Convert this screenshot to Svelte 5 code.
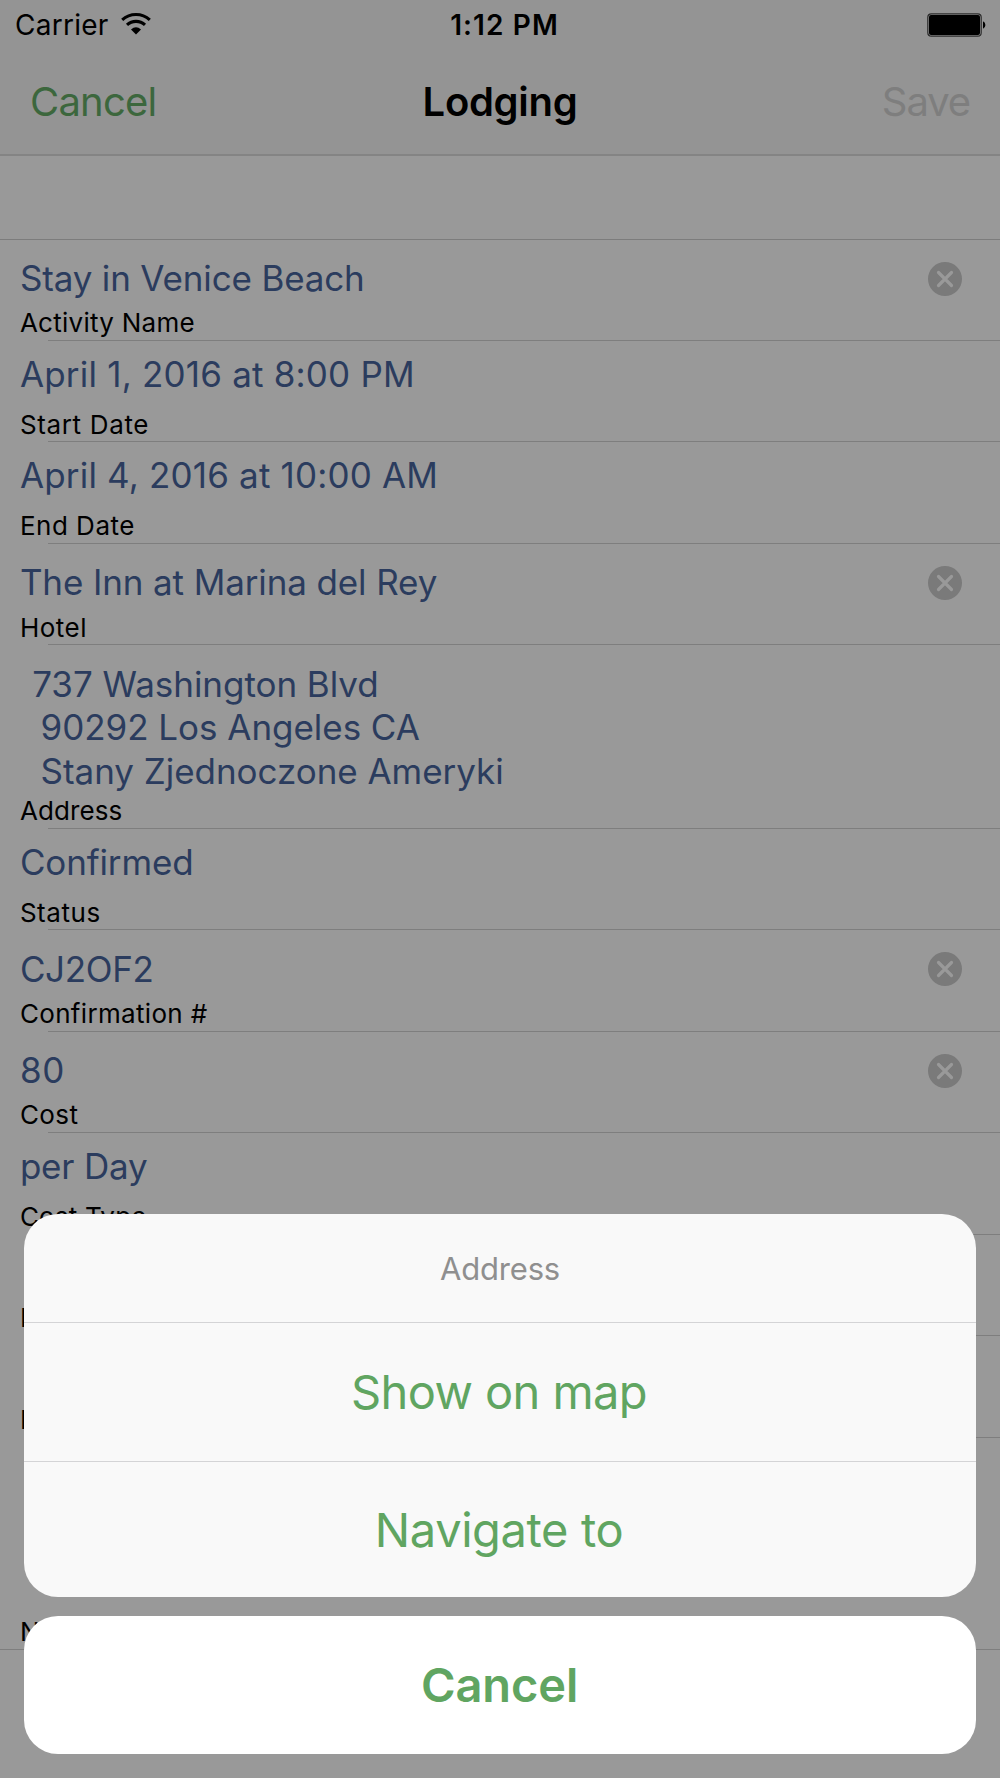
<script>
  const fields = [
    { label: 'Activity Name', lt: 0.27, lines: ['Stay in Venice Beach'], vt: -0.16, clear: true },
    { label: 'Start Date', lt: 0.65, lines: ['April 1, 2016 at 8:00 PM'], vt: 0.2 },
    { label: 'End Date', lt: 0.5, lines: ['April 4, 2016 at 10:00 AM'], vt: 0.18 },
    { label: 'Hotel', lt: 0.5, lines: ['The Inn at Marina del Rey'], vt: -0.12, clear: true },
    {
      label: 'Address', lt: 0.1, vt: -0.04, kind: 'address',
      lines: ['737 Washington Blvd', '90292 Los Angeles CA', 'Stany Zjednoczone Ameryki']
    },
    { label: 'Status', lt: 0.55, lines: ['Confirmed'], vt: -0.15 },
    { label: 'Confirmation #', lt: 0.33, lines: ['CJ2OF2'], vt: -0.35, clear: true },
    { label: 'Cost', lt: 0.4, lines: ['80'], vt: 0.6, clear: true },
    { label: 'Cost Type', lt: 0.2, lines: ['per Day'], vt: -0.2 },
    { label: 'Info', lt: 0.35, lines: [], vt: 0 },
    { label: 'Invoice', lt: 0.35, lines: [], vt: 0 },
    { label: 'Notes', lt: 0.35, lines: [], vt: 0, kind: 'notes' }
  ];
</script>

<div class="screen">
  <header>
    <div class="status">
      <div class="carrier">
        <span class="carrier-name">Carrier</span>
        <svg class="wifi" viewBox="0 0 30 22" width="30" height="22">
          <path d="M15 21.6 L10 16.4 Q15 12 20 16.4 Z" fill="#000" />
          <path d="M6 11.9 A13.2 13.2 0 0 1 24 11.9" fill="none" stroke="#000" stroke-width="3.1" />
          <path d="M1.2 6.9 A20.5 20.5 0 0 1 28.8 6.9" fill="none" stroke="#000" stroke-width="3.1" />
        </svg>
      </div>
      <span class="time">1:12 PM</span>
      <svg class="battery" viewBox="0 0 60 24" width="60" height="24">
        <rect x="0.8" y="0.8" width="53.4" height="22.4" rx="3.5" fill="none" stroke="#2c2c2c" stroke-width="1.2" />
        <rect x="2" y="2" width="51" height="20" rx="2" fill="#000" />
        <path d="M56 8.2 A4.2 4.2 0 0 1 56 15.8 Z" fill="#000" />
      </svg>
    </div>
    <nav>
      <span class="nav-cancel">Cancel</span>
      <h1>Lodging</h1>
      <span class="nav-save">Save</span>
    </nav>
  </header>

  <main>
    <div class="spacer"></div>
    {#each fields as f}
      <section class="row {f.kind ?? ''}" class:clearable={f.clear}>
        <div class="value" style:letter-spacing="{f.vt}px">
          {#each f.lines as line}<div class="line">{line}</div>{/each}
        </div>
        <div class="label" style:letter-spacing="{f.lt}px">{f.label}</div>
        {#if f.clear}
          <svg class="clear" viewBox="0 0 34 34" width="34" height="34">
            <circle cx="17" cy="17" r="17" fill="#7a7a7a" />
            <path d="M10.5 10.5 L23.5 23.5 M23.5 10.5 L10.5 23.5" stroke="#999" stroke-width="3.2" stroke-linecap="round" />
          </svg>
        {/if}
      </section>
    {/each}
  </main>

  <div class="sheet">
    <div class="group">
      <div class="title">Address</div>
      <div class="action show">Show on map</div>
      <div class="action navigate">Navigate to</div>
    </div>
    <div class="dismiss">Cancel</div>
  </div>
</div>

<style>
  :global(body) { margin: 0; background: #999; }
  .screen {
    position: relative;
    width: 1000px;
    height: 1778px;
    overflow: hidden;
    background: #999;
    color: #000;
    font-family: Inter, "Liberation Sans", sans-serif;
    white-space: nowrap;
  }
  header {
    box-sizing: border-box;
    height: 156px;
    background: #949494;
    border-bottom: 2px solid #848484;
  }
  .status, nav {
    display: grid;
    grid-template-columns: 1fr auto 1fr;
    align-items: center;
  }
  .status {
    height: 50px;
    padding: 0 14px 0 15px;
    font-size: 28px;
    line-height: 50px;
  }
  .carrier { display: flex; align-items: center; gap: 12px; letter-spacing: 0.25px; }
  .wifi { margin-bottom: 3px; }
  .time { padding-left: 8px; font-weight: 600; letter-spacing: 1.1px; }
  .battery { justify-self: end; margin-right: -1px; }
  nav {
    height: 104px;
    padding: 0 30px;
    font-size: 40px;
    line-height: 50px;
  }
  .nav-cancel { color: #3c673d; letter-spacing: -0.8px; }
  h1 { margin: 0; font-size: 40px; font-weight: 600; line-height: 50px; letter-spacing: -0.3px; }
  .nav-save { justify-self: end; color: #7e7e7e; letter-spacing: -1.1px; }
  .spacer {
    box-sizing: border-box;
    height: 83.6px;
    border-bottom: 1px solid #7c7c7c;
  }
  .row {
    position: relative;
    box-sizing: border-box;
    display: flex;
    flex-direction: column;
    justify-content: space-between;
    height: 101.45px;
    padding: 12px 19.9px 2.8px;
  }
  .row::after {
    content: "";
    position: absolute;
    left: 48px;
    right: 0;
    bottom: 0;
    height: 1px;
    background: #7e7e7e;
  }
  .clearable, .address { padding-top: 17.3px; }
  .address { height: 183.6px; }
  .address .line { padding-left: 20.7px; }
  .address .line:first-child { padding-left: 12.3px; }
  .notes { height: 212px; }
  .notes::after { left: 0; }
  .value { font-size: 35px; line-height: 43.6px; color: #2b3c5e; }
  .label { font-size: 26px; line-height: 30px; }
  .clear { position: absolute; right: 38px; top: 22px; }
  .sheet {
    position: absolute;
    left: 24.3px;
    right: 24.3px;
    bottom: 24.4px;
    display: flex;
    flex-direction: column;
    gap: 19.4px;
    text-align: center;
    color: #60a561;
    font-size: 47px;
  }
  .group { overflow: hidden; border-radius: 34px; background: #f9f9f9; }
  .title {
    height: 107.4px;
    line-height: 109.6px;
    font-size: 31px;
    letter-spacing: -0.2px;
    color: #8f8f8f;
  }
  .action { box-sizing: border-box; border-top: 1px solid #d4d4d6; padding-right: 2px; }
  .show { height: 139.5px; line-height: 138px; letter-spacing: -0.6px; }
  .navigate { height: 135.7px; line-height: 136px; letter-spacing: -0.4px; }
  .dismiss {
    box-sizing: border-box;
    height: 137.5px;
    padding-right: 1px;
    line-height: 138px;
    border-radius: 34px;
    background: #fff;
    font-weight: 600;
    letter-spacing: -0.1px;
  }
</style>
